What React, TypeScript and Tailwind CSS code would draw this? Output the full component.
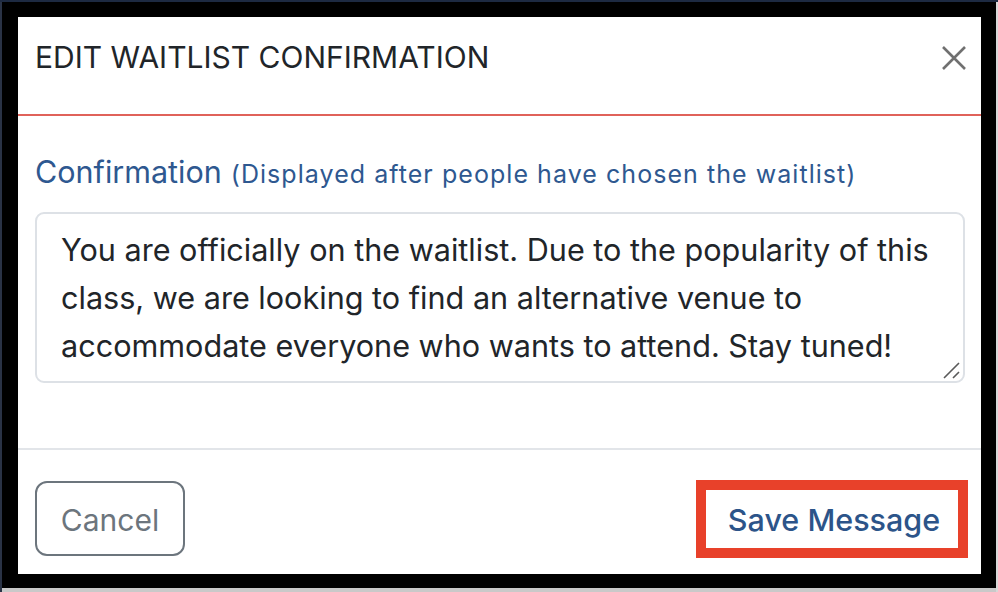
import React from "react";

const font = { fontFamily: "Inter, 'Liberation Sans', sans-serif" };

export default function App() {
  return (
    <div
      className="w-[998px] h-[592px] bg-[#c9c9c9] overflow-hidden flex flex-col"
      style={font}
    >
      <div className="h-[2px] w-full bg-[#1d2a42] shrink-0" />
      <div className="flex flex-1">
        <div className="w-[2px] bg-[#2a3346]" />
        <div className="w-[994px] h-[586px] bg-black pl-[16px] pt-[15px] pr-[15px] pb-[14px]">
          <div className="w-[963px] h-[557px] bg-white flex flex-col">
            {/* Header */}
            <div className="h-[97px] flex items-center justify-between pl-[17px] pr-[15px] pb-[16px]">
              <h1 className="text-[30px] font-normal text-[#212529]">
                EDIT WAITLIST CONFIRMATION
              </h1>
              <svg width="24" height="24" viewBox="0 0 24 24">
                <path d="M1 1 L23 23 M23 1 L1 23" stroke="#707070" strokeWidth="2.6" strokeLinecap="butt" />
              </svg>
            </div>
            <div className="h-[2px] bg-[#e0625a]" />
            {/* Body */}
            <div className="pt-[32px] px-[17px] h-[332px]">
              <div className="h-[48px] leading-[48px] flex items-baseline text-[#2e5890]">
                <span className="text-[30.5px]">Confirmation</span>
                <span className="text-[25px] ml-[9px] tracking-[1.05px]">
                  (Displayed after people have chosen the waitlist)
                </span>
              </div>
              <div className="mt-[16px] w-[930px] h-[171px] border-2 border-[#dde1e6] rounded-[9px] px-[24px] pt-[12px] relative">
                <div className="text-[30.6px] leading-[48px] text-[#212529] whitespace-nowrap">
                  <div>You are officially on the waitlist. Due to the popularity of this</div>
                  <div>class, we are looking to find an alternative venue to</div>
                  <div>accommodate everyone who wants to attend. Stay tuned!</div>
                </div>
                <svg
                  className="absolute right-[2px] bottom-[2px]"
                  width="18"
                  height="18"
                  viewBox="0 0 18 18"
                >
                  <path d="M1 17 L16 2 M10 17 L16 11" stroke="#5a5a5a" strokeWidth="1.6" />
                </svg>
              </div>
            </div>
            <div className="h-[2px] bg-[#e2e5e9]" />
            {/* Footer */}
            <div className="flex items-start justify-between pl-[17px] pr-[13px] pt-[31px]">
              <button className="w-[150px] h-[75px] border-2 border-[#6c757d] rounded-[12px] text-[30px] text-[#6c757d] flex items-center justify-center pt-[3px]">
                Cancel
              </button>
              <div className="-mt-[1px] w-[272px] h-[78px] border-[10px] border-[#e8412a] flex items-center justify-center pt-[2px] pl-[4px]">
                <span className="text-[30.5px] font-medium text-[#2c5489]">Save Message</span>
              </div>
            </div>
          </div>
        </div>
        <div className="w-[2px] bg-[#d8d8d8]" />
      </div>
    </div>
  );
}
